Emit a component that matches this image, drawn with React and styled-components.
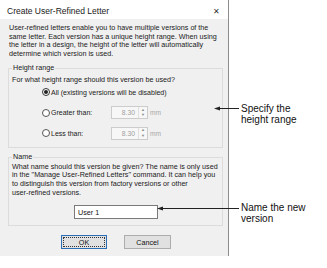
import styled, { createGlobalStyle } from "styled-components";

const GlobalStyle = createGlobalStyle`
  html, body {
    margin: 0;
    padding: 0;
    background: #ffffff;
  }
`;

const Page = styled.div`
  position: relative;
  width: 327px;
  height: 268px;
  overflow: hidden;
  background: #ffffff;
  font-family: "Liberation Sans", Arial, sans-serif;
`;

const Dialog = styled.div`
  width: 228px;
  height: 256px;
  border-right: 1px solid #8c8c8c;
  display: flex;
  flex-direction: column;
`;

const TitleBar = styled.div`
  height: 19px;
  flex: none;
  background: #ffffff;
  display: flex;
  align-items: center;
  justify-content: space-between;
  padding: 3px 8px 0 7px;
  box-sizing: border-box;
  font-size: 8.5px;
  color: #1a1a1a;
`;

const Close = styled.span`
  font-size: 8px;
  color: #333;
`;

const Body = styled.div`
  flex: 1;
  background: #f0f0f0;
  padding: 5px 5px 0 8px;
  display: flex;
  flex-direction: column;
`;

const Para = styled.div`
  font-size: 7.2px;
  line-height: ${(p) => p.$lh || 8.5}px;
  color: #1a1a1a;
  white-space: nowrap;
  margin: ${(p) => p.$top || 0}px 0 0 ${(p) => p.$indent || 0}px;
`;

const Group = styled.fieldset`
  margin: ${(p) => p.$top}px 0 0 0;
  padding: 0 0 0 2px;
  border: 1px solid #dcdcdc;
  height: ${(p) => p.$height}px;
  box-sizing: border-box;
  min-width: 0;
  display: flex;
  flex-direction: column;
`;

const Legend = styled.legend`
  font-size: 7.2px;
  line-height: 8px;
  height: 8px;
  color: #1a1a1a;
  padding: 0 1px;
  margin-left: 1px;
`;

const RadioList = styled.div`
  display: flex;
  flex-direction: column;
  gap: 6.5px;
  margin: 1px 0 0 31px;
`;

const RadioRow = styled.div`
  display: flex;
  align-items: center;
  height: 14px;
`;

const RadioLabel = styled.div`
  display: flex;
  align-items: center;
  gap: 1px;
  width: ${(p) => (p.$wide ? "auto" : "69px")};
  font-size: 7px;
  color: #1a1a1a;
  white-space: nowrap;
`;

const Circle = styled.span`
  width: 8px;
  height: 8px;
  border-radius: 50%;
  border: 1px solid ${(p) => (p.$on ? "#333" : "#555")};
  background: #fff;
  box-sizing: border-box;
  display: flex;
  align-items: center;
  justify-content: center;
  &::after {
    content: "";
    width: 4px;
    height: 4px;
    border-radius: 50%;
    background: ${(p) => (p.$on ? "#222" : "transparent")};
  }
`;

const Spin = styled.div`
  width: 37px;
  height: 13px;
  border: 1px solid #cccccc;
  background: #f7f7f7;
  box-sizing: border-box;
  display: flex;
`;

const SpinValue = styled.div`
  flex: 1;
  font-size: 6.8px;
  color: #a0a0a0;
  display: flex;
  align-items: center;
  justify-content: flex-end;
  padding-right: 3px;
`;

const SpinButtons = styled.div`
  width: 8px;
  border-left: 1px solid #e0e0e0;
  display: flex;
  flex-direction: column;
  align-items: center;
  justify-content: space-around;
  font-size: 4px;
  line-height: 4px;
  color: #8a8a8a;
`;

const Unit = styled.span`
  margin-left: 2px;
  font-size: 6.6px;
  color: #a8a8a8;
`;

const InputRow = styled.div`
  display: flex;
  margin: 8px 0 0 63px;
`;

const TextInput = styled.div`
  width: 84px;
  height: 14px;
  border: 1px solid #7a7a7a;
  background: #ffffff;
  box-sizing: border-box;
  font-size: 7.2px;
  color: #111;
  display: flex;
  align-items: center;
  padding-left: 3px;
`;

const ButtonRow = styled.div`
  display: flex;
  gap: 17px;
  margin: 9px 0 0 53px;
`;

const Button = styled.div`
  width: ${(p) => p.$w}px;
  height: 14px;
  box-sizing: border-box;
  background: #e1e1e1;
  border: 1px solid ${(p) => (p.$primary ? "#2b6fb6" : "#adadad")};
  display: flex;
  align-items: center;
  justify-content: center;
  font-size: 7.2px;
  color: #111;
  position: relative;
  &::after {
    content: "";
    display: ${(p) => (p.$primary ? "block" : "none")};
    position: absolute;
    inset: 1px;
    border: 1px dotted #333;
  }
`;

const Callout = styled.div`
  position: absolute;
  left: ${(p) => p.$x}px;
  top: ${(p) => p.$y}px;
  font-family: "Liberation Sans", Arial, sans-serif;
  font-size: 10px;
  line-height: 11px;
  color: #111;
`;

const ArrowSvg = styled.svg`
  position: absolute;
  left: 0;
  top: 0;
  pointer-events: none;
`;

const Arrow = ({ x1, x2, y }) => (
  <g>
    <line x1={x1 + 3} y1={y + 0.5} x2={x2} y2={y + 0.5} stroke="#222" strokeWidth="1" />
    <polygon points={`${x1},${y + 0.5} ${x1 + 6},${y - 1.5} ${x1 + 6},${y + 2.5}`} fill="#222" />
  </g>
);

const SpinBox = () => (
  <>
    <Spin>
      <SpinValue>8.30</SpinValue>
      <SpinButtons>
        <span>▲</span>
        <span>▼</span>
      </SpinButtons>
    </Spin>
    <Unit>mm</Unit>
  </>
);

export default function App() {
  return (
    <Page>
      <GlobalStyle />
      <Dialog>
        <TitleBar>
          <span>Create User-Refined Letter</span>
          <Close>✕</Close>
        </TitleBar>
        <Body>
          <Para $indent={1}>
            User-refined letters enable you to have multiple versions of the
            <br />
            same letter. Each version has a unique height range. When using
            <br />
            the letter in a design, the height of the letter will automatically
            <br />
            determine which version is used.
          </Para>
          <Group $top={6} $height={84}>
            <Legend>Height range</Legend>
            <Para $indent={1} $top={3.5}>
              For what height range should this version be used?
            </Para>
            <RadioList>
              <RadioRow>
                <RadioLabel $wide>
                  <Circle $on />
                  All (existing versions will be disabled)
                </RadioLabel>
              </RadioRow>
              <RadioRow>
                <RadioLabel>
                  <Circle />
                  Greater than:
                </RadioLabel>
                <SpinBox />
              </RadioRow>
              <RadioRow>
                <RadioLabel>
                  <Circle />
                  Less than:
                </RadioLabel>
                <SpinBox />
              </RadioRow>
            </RadioList>
          </Group>
          <Group $top={5} $height={73}>
            <Legend>Name</Legend>
            <Para $indent={1} $top={1.8} $lh={8.6}>
              What name should this version be given? The name is only used
              <br />
              in the "Manage User-Refined Letters" command. It can help you
              <br />
              to distinguish this version from factory versions or other
              <br />
              user-refined versions.
            </Para>
            <InputRow>
              <TextInput>User 1</TextInput>
            </InputRow>
          </Group>
          <ButtonRow>
            <Button $w={46} $primary>OK</Button>
            <Button $w={47}>Cancel</Button>
          </ButtonRow>
        </Body>
      </Dialog>
      <ArrowSvg width="327" height="268">
        <Arrow x1={214} x2={239} y={108} />
        <Arrow x1={157} x2={239} y={208} />
      </ArrowSvg>
      <Callout $x={241} $y={103}>
        Specify the
        <br />
        height range
      </Callout>
      <Callout $x={241} $y={202}>
        Name the new
        <br />
        version
      </Callout>
    </Page>
  );
}
